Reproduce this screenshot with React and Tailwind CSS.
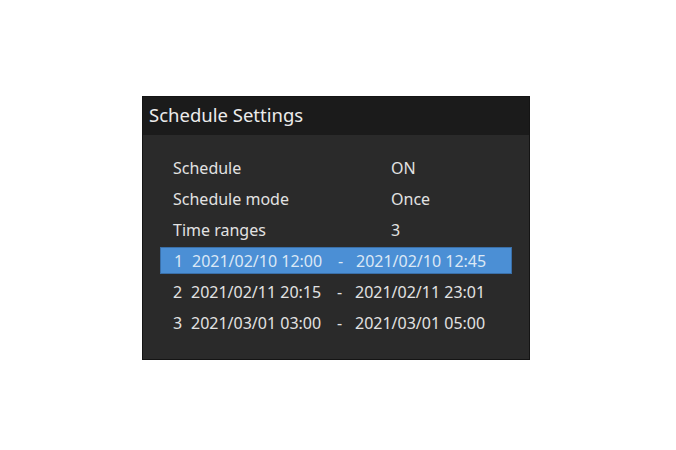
const rows = [
  { label: "Schedule", value: "ON" },
  { label: "Schedule mode", value: "Once" },
  { label: "Time ranges", value: "3" },
];

const ranges = [
  { n: 1, from: "2021/02/10 12:00", to: "2021/02/10 12:45" },
  { n: 2, from: "2021/02/11 20:15", to: "2021/02/11 23:01" },
  { n: 3, from: "2021/03/01 03:00", to: "2021/03/01 05:00" },
];

export default function App() {
  return (
    <div className="w-[676px] h-[450px] bg-white pt-[96px] pl-[142px]" style={{ fontFamily: '"Noto Sans", "Open Sans", sans-serif' }}>
      <div className="w-[388px] h-[264px] bg-[#2a2a2a] border border-[#141414] flex flex-col">
        <div className="h-[38px] bg-[#1b1b1b] flex items-center pl-[6px] pb-[3px] text-[18.5px] text-[#ececec]">
          Schedule Settings
        </div>

        <div className="flex flex-col gap-[4px] pt-[19px] pl-[17px] pr-[17px] text-[16px] text-[#e2e2e2]">
          {rows.map((r) => (
            <div key={r.label} className="h-[27px] flex items-center pl-[13px]">
              <div className="w-[218px]">{r.label}</div>
              <div>{r.value}</div>
            </div>
          ))}

          {ranges.map((r) => (
            <div
              key={r.n}
              className={`h-[27px] flex items-center pl-[13px] ${r.n === 1 ? "bg-[#4b8fd5] border border-[#3a6fa8] text-[#dbe8f6]" : ""}`}
            >
              <div className="w-[18px]">{r.n}</div>
              <div className="w-[146px]">{r.from}</div>
              <div className="w-[18px]">-</div>
              <div>{r.to}</div>
            </div>
          ))}
        </div>
      </div>
    </div>
  );
}
